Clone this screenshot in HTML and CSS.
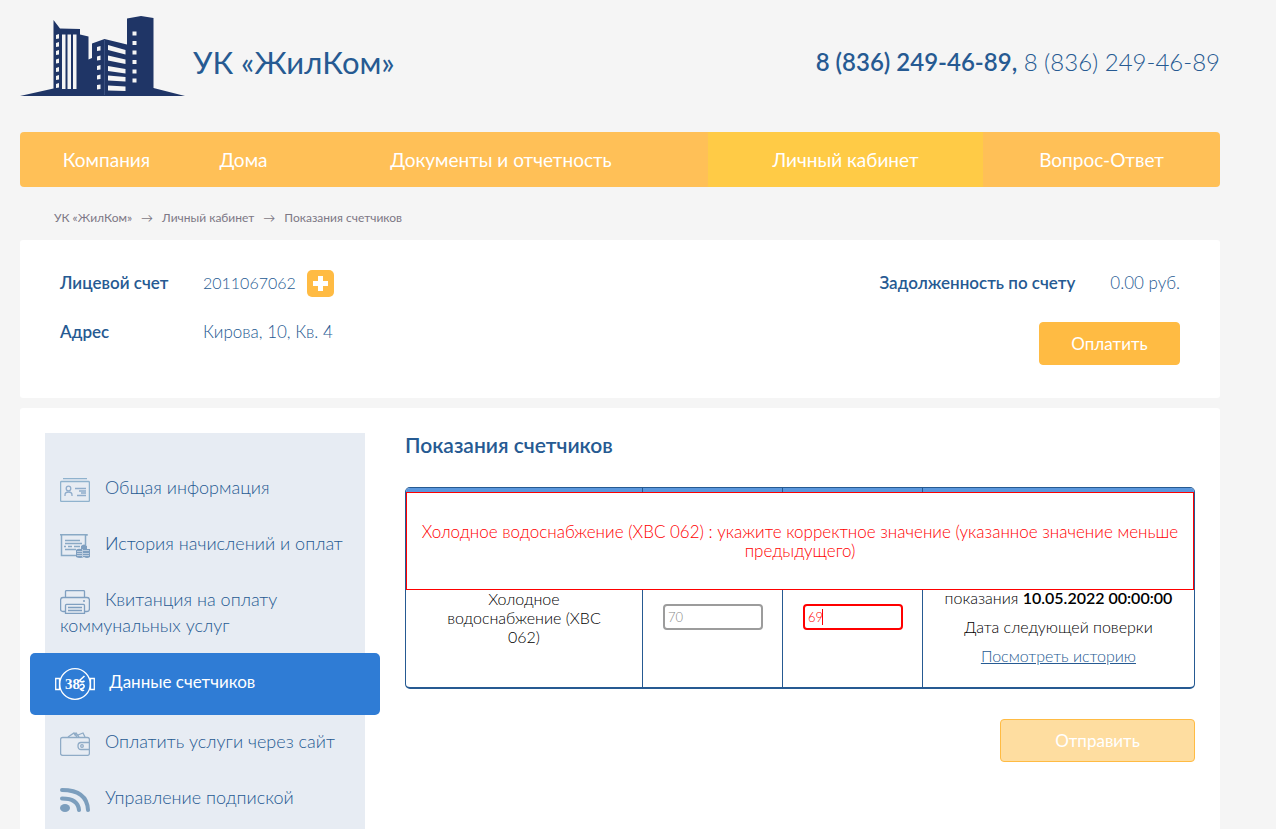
FILE: index.html
```html
<!DOCTYPE html>
<html lang="ru">
<head>
  <title>Показания счетчиков</title>
  <meta charset="utf-8">
  <meta name="viewport" content="width=device-width, initial-scale=1">
  <link rel="stylesheet" href="styles.css">
</head>
<body>
  <div class="wrapper">
    <header class="header">
      <a href="#" class="logo">
        <svg class="logo-img" viewBox="0 0 165 80" aria-hidden="true">
          <path fill="#1f3566" d="M0 80l33.500-7.500V4L40 12.500l20 .5v5.500l8.500 2v23L72 42V27.500L84.500 23 107 28.500v-26L121 0l12.500 2v70L165 80z"/>
          <g fill="#f5f5f5">
            <path d="M36 19l3-1v4.500l-3 .5zM36 27l3-1v4.500l-3 .5zM36 35l3-1v4.500l-3 .5zM36 43.500l3-1V47l-3 .5zM36 52l3-1v4.500l-3 .5zM36 60l3-1v4.500l-3 .5zM36 68l3-1v4.500l-3 .5z"/>
            <path d="M42 18.500h3.500V73H42zM47.500 18.500H51V73h-3.500zM53 18.500h3.500V73H53z"/>
            <path d="M77 31l3.500-1v4.500L77 35zM77 40.500l3.500-1V44l-3.500.5zM77 50l3.500-1v4.500l-3.500.5zM77 59.500l3.500-1V63l-3.500.5zM77 69l3.500-.5V73L77 73.500z"/>
            <path d="M88 29l17.500 5v4.500L88 34zM88 39.500l17.500 4V48L88 44.500zM88 50l17.500 3v4.500L88 55zM88 59.500l17.500 1.500v4.500L88 64.500zM88 69.500l17.500 1V75L88 74.500z"/>
            <path d="M112.500 15.500h4v4h-4zM112.500 25h4v4h-4zM112.500 34.500h4v4h-4zM112.500 44h4v4h-4zM112.500 53.500h4v4h-4zM112.500 62.500h4v4h-4z"/>
          </g>
          <path stroke="#3a5080" d="M84.500 24v55"/>
        </svg>
        <span class="logo-text">УК «ЖилКом»</span>
      </a>
      <div class="phones"><b>8 (836) 249-46-89,</b> 8 (836) 249-46-89</div>
    </header>

    <nav class="menu">
      <a href="#" class="menu-company">Компания</a>
      <a href="#" class="menu-houses">Дома</a>
      <a href="#" class="menu-docs">Документы и отчетность</a>
      <a href="#" class="menu-cabinet active">Личный кабинет</a>
      <a href="#" class="menu-faq">Вопрос-Ответ</a>
    </nav>

    <div class="breadcrumbs">
      <a href="#">УК «ЖилКом»</a>
      <span class="arrow">→</span>
      <a href="#">Личный кабинет</a>
      <span class="arrow">→</span>
      <span>Показания счетчиков</span>
    </div>

    <section class="account">
      <dl class="account-info">
        <dt>Лицевой счет</dt>
        <dd>
          <span class="number">2011067062</span>
          <button type="button" class="add" aria-label="Добавить счет">
            <svg width="15" height="15" viewBox="0 0 15 15"><path fill="#fff" d="M5 0h5v5h5v5h-5v5H5v-5H0V5h5z"/></svg>
          </button>
        </dd>
        <dt>Адрес</dt>
        <dd>Кирова, 10, Кв. 4</dd>
      </dl>
      <div class="account-pay">
        <div class="debt"><b>Задолженность по счету</b> <span>0.00 руб.</span></div>
        <button type="button" class="btn">Оплатить</button>
      </div>
    </section>

    <main class="content">
      <ul class="sidebar">
        <li><a href="#">
          <svg class="icon" viewBox="0 0 30 24"><g fill="none" stroke="#8fb2cd" stroke-width="1.300"><path d="M3 .6h24"/><rect x=".6" y="3.500" width="28.800" height="19.900" rx="1"/><g stroke="#8faccb"><circle cx="8.500" cy="10.500" r="2.300"/><path d="M5 18v-1q0-3 3.500-3t3.500 3v1M15 10.500h11M19 13h7M21 15h5M17 17.500h9"/></g></g></svg>
          Общая информация</a></li>
        <li><a href="#">
          <svg class="icon" viewBox="0 0 30 24"><g fill="none" stroke="#89a9c5"><path stroke-width="1.500" d="M0 1.500V.7h27v1M1.500 1v20.500H16M25.500 1v10"/><path stroke-width="1.300" d="M5 6.500h15M5 9.500h17M4 12.500h2m2 0h4m2 0h6M5 15.500h11"/></g><path fill="#7f9fc0" d="M21 12q3-3 6 0v3h3v8q-3 2-6 0-4 2-8 0v-7q2-2 5-1z"/><path stroke="#e7ecf3" stroke-width=".6" d="M17 17.500h5m1-1h6m-12 3h5m1 0h6m-12 2h5m1 0h6M22.500 15v8"/></svg>
          История начислений и оплат</a></li>
        <li><a href="#">
          <svg class="icon" viewBox="0 0 30 24"><g fill="none" stroke="#7f9fc0" stroke-width="1.300"><path d="M5.500 7V1.600q0-1 1-1h17q1 0 1 1V7M5 21.500H3q-2.400 0-2.400-2.500v-9q0-2.500 2.400-2.500h24q2.400 0 2.400 2.500v9q0 2.500-2.400 2.500h-2"/><path d="M5.500 23.400v-8q0-1 1-1h17q1 0 1 1v8zM8 17.500h14M8 20.500h14"/></g><circle cx="24" cy="11" r="1" fill="#7f9fc0"/></svg>
          Квитанция на оплату коммунальных услуг</a></li>
        <li class="current"><a href="#">
          <svg class="icon" viewBox="0 0 40 32"><g fill="none" stroke="#fff" stroke-width="1.300"><circle cx="20" cy="16" r="15.300"/><path d="M5 10.500H.7v11H5M4.500 10v12M35 10.500h4.300v11H35M35.500 10v12"/><path stroke-width="1.600" d="M29.500 8l-5 4.500q2 2.500 5 .5M25 17.500q3-2.500 4 0t-3.500 3.500q2 2.500 3.500 1"/></g><text class="icon-digits" x="10" y="21">38</text></svg>
          Данные счетчиков</a></li>
        <li><a href="#">
          <svg class="icon" viewBox="0 0 30 24"><g fill="none" stroke="#8fabc6" stroke-width="1.300"><rect x=".6" y="5.500" width="28.800" height="17.900" rx="2"/><path d="M8 5l6-4 3 4M14 3l2-2 3 4M18 3l5-2 2 4M29 10.500h-8q-3 0-3 3.500t3 3.500h8"/><circle cx="22" cy="14" r="1.300"/></g></svg>
          Оплатить услуги через сайт</a></li>
        <li><a href="#">
          <svg class="icon" viewBox="0 0 30 24"><g fill="none" stroke="#7c9ebd" stroke-width="4" stroke-linecap="round"><path d="M2 2q25 0 26 20M2 10.500q16 0 17 11.500"/></g><ellipse cx="5" cy="20" rx="5" ry="4" fill="#7c9ebd"/></svg>
          Управление подпиской</a></li>
      </ul>

      <form class="meters">
        <h1>Показания счетчиков</h1>
        <div class="table-wrap">
          <table>
            <thead>
              <tr><th class="col-name"></th><th class="col-value"></th><th class="col-value"></th><th></th></tr>
            </thead>
            <tbody>
              <tr>
                <td class="name">Холодное водоснабжение (ХВС 062)</td>
                <td><input type="text" value="70" aria-label="Предыдущее показание" disabled></td>
                <td>
                  <div class="field">
                    <input type="text" class="invalid" value="69" aria-label="Текущее показание">
                    <span class="caret"></span>
                  </div>
                </td>
                <td class="details">
                  <p>показания <b>10.05.2022 00:00:00</b></p>
                  <p>Дата следующей поверки</p>
                  <p><a href="#">Посмотреть историю</a></p>
                </td>
              </tr>
            </tbody>
          </table>
          <div class="error">Холодное водоснабжение (ХВС 062) : укажите корректное значение (указанное значение меньше предыдущего)</div>
        </div>
        <button type="submit" class="btn btn-send" disabled>Отправить</button>
      </form>
    </main>
  </div>
</body>
</html>
```
FILE: styles.css
```css
* {
  box-sizing: border-box;
}

body {
  margin: 0;
  background: #f5f5f5;
  color: #265a92;
  font: 300 17px/20px Lato, "Open Sans", sans-serif;
}

a {
  color: inherit;
  text-decoration: none;
}

b {
  font-weight: 600;
}

.wrapper {
  display: flex;
  flex-direction: column;
  max-width: 1200px;
  min-height: 100vh;
  margin-left: 20px;
}

/* header */
.header {
  display: flex;
  justify-content: space-between;
  align-items: center;
  padding: 16px 0 36px;
}

.logo {
  display: flex;
  align-items: center;
  gap: 8px;
}

.logo-img {
  width: 165px;
  height: 80px;
}

.logo-text {
  font-size: 31px;
  line-height: 40px;
  font-weight: 400;
  padding-top: 12px;
}

.phones {
  font-size: 24px;
  line-height: 30px;
  padding-top: 12px;
}

/* main menu */
.menu {
  display: flex;
  background: #ffc057;
  border-radius: 4px;
  overflow: hidden;
}

.menu a {
  color: #fff;
  font-size: 19px;
  font-weight: 400;
  line-height: 55px;
  text-align: center;
  white-space: nowrap;
}

.menu-company { flex: 173; }
.menu-houses { flex: 101; }
.menu-docs { flex: 414; }
.menu-cabinet { flex: 275; }
.menu-faq { flex: 237; }

.menu .active {
  background: #ffcb46;
}

.breadcrumbs {
  display: flex;
  gap: 9px;
  padding: 21px 34px 12px;
  color: #7d7885;
  font-size: 12px;
  font-weight: 400;
}

/* account */
.account {
  display: flex;
  justify-content: space-between;
  min-height: 158px;
  margin-bottom: 10px;
  padding: 27px 40px;
  background: #fff;
  border-radius: 3px;
}

.account-info {
  display: grid;
  grid-template-columns: 143px auto;
  row-gap: 17px;
  align-content: start;
  margin: 0;
  line-height: 32px;
}

.account-info dt {
  font-weight: 600;
}

.account-info dd {
  display: flex;
  align-items: center;
  gap: 11px;
  margin: 0;
}

.number {
  font-size: 16px;
}

.add {
  display: flex;
  align-items: center;
  justify-content: center;
  width: 27px;
  height: 27px;
  padding: 0;
  background: #ffbb43;
  border: 0;
  border-radius: 5px;
}

.account-pay {
  display: flex;
  flex-direction: column;
  align-items: flex-end;
  gap: 23px;
}

.debt {
  display: flex;
  gap: 35px;
  line-height: 32px;
}

.btn {
  width: 141px;
  height: 43px;
  background: #ffbb43;
  border: 1px solid #ffbb43;
  border-radius: 4px;
  color: #fff;
  font: inherit;
  font-weight: 400;
}

/* content */
.content {
  display: flex;
  flex: 1;
  gap: 40px;
  padding: 25px 25px 0;
  background: #fff;
  border-radius: 3px 3px 0 0;
}

.sidebar {
  flex: none;
  width: 320px;
  margin: 0;
  padding: 26px 0 0;
  background: #e7ecf3;
  font-size: 18px;
  list-style: none;
}

.sidebar a {
  display: block;
  padding: 15px 20px 15px 15px;
  line-height: 26px;
}

.sidebar .icon {
  width: 30px;
  height: 24px;
  margin: -4px 10px -4px 0;
  vertical-align: middle;
}

.sidebar .current a {
  margin: 0 -15px -2px;
  padding: 13px 20px 17px 25px;
  background: #2f7cd5;
  border-radius: 5px;
  color: #fff;
  font-size: 17px;
  font-weight: 400;
  line-height: 32px;
}

.sidebar .current .icon {
  width: 40px;
  height: 32px;
}

.icon-digits {
  fill: #fff;
  font: bold 15px "Liberation Serif", serif;
}

.meters {
  flex: 1;
  display: flex;
  flex-direction: column;
  padding-bottom: 40px;
}

.meters h1 {
  margin: 0 0 30px;
  font-size: 21px;
  line-height: 24px;
  font-weight: 600;
}

.table-wrap {
  position: relative;
  margin-bottom: 30px;
  border: 1px solid #265a92;
  border-bottom-width: 2px;
  border-radius: 5px;
  overflow: hidden;
}

table {
  width: 100%;
  border-collapse: collapse;
  table-layout: fixed;
  color: #000;
  font-size: 16px;
  line-height: 19px;
  text-align: center;
}

th {
  height: 59px;
  background: #5b97dc;
}

.col-name {
  width: 30%;
}

.col-value {
  width: 140px;
}

th + th,
td + td {
  border-left: 1px solid #265a92;
}

td {
  height: 140px;
  padding: 0 19px 0 20px;
}

td.name {
  padding: 0 30px;
}

td.details {
  padding: 19px 10px 0;
}

.details p {
  margin: 0 0 10px;
}

.details p:last-child {
  margin: 0;
}

.details a {
  color: #265a92;
  text-decoration: underline;
}

.field {
  position: relative;
}

input {
  display: block;
  width: 100%;
  height: 26px;
  padding: 0 3px;
  background: #fff;
  border: 2px solid #9c9c9c;
  border-radius: 4px;
  color: #888;
  font: inherit;
  font-size: 13px;
}

.invalid {
  border-color: #f00;
  color: #f00;
}

.caret {
  position: absolute;
  top: 5px;
  left: 19px;
  width: 1px;
  height: 16px;
  background: #f00;
}

.error {
  position: absolute;
  top: 4px;
  left: 0;
  right: 0;
  display: flex;
  align-items: center;
  height: 98px;
  padding: 0 10px;
  background: #fff;
  border: 1px solid #f00;
  color: #f00;
  font-size: 17px;
  line-height: 19px;
  text-align: center;
}

.btn-send {
  align-self: flex-end;
  width: 195px;
  background: #fedda0;
}
```
